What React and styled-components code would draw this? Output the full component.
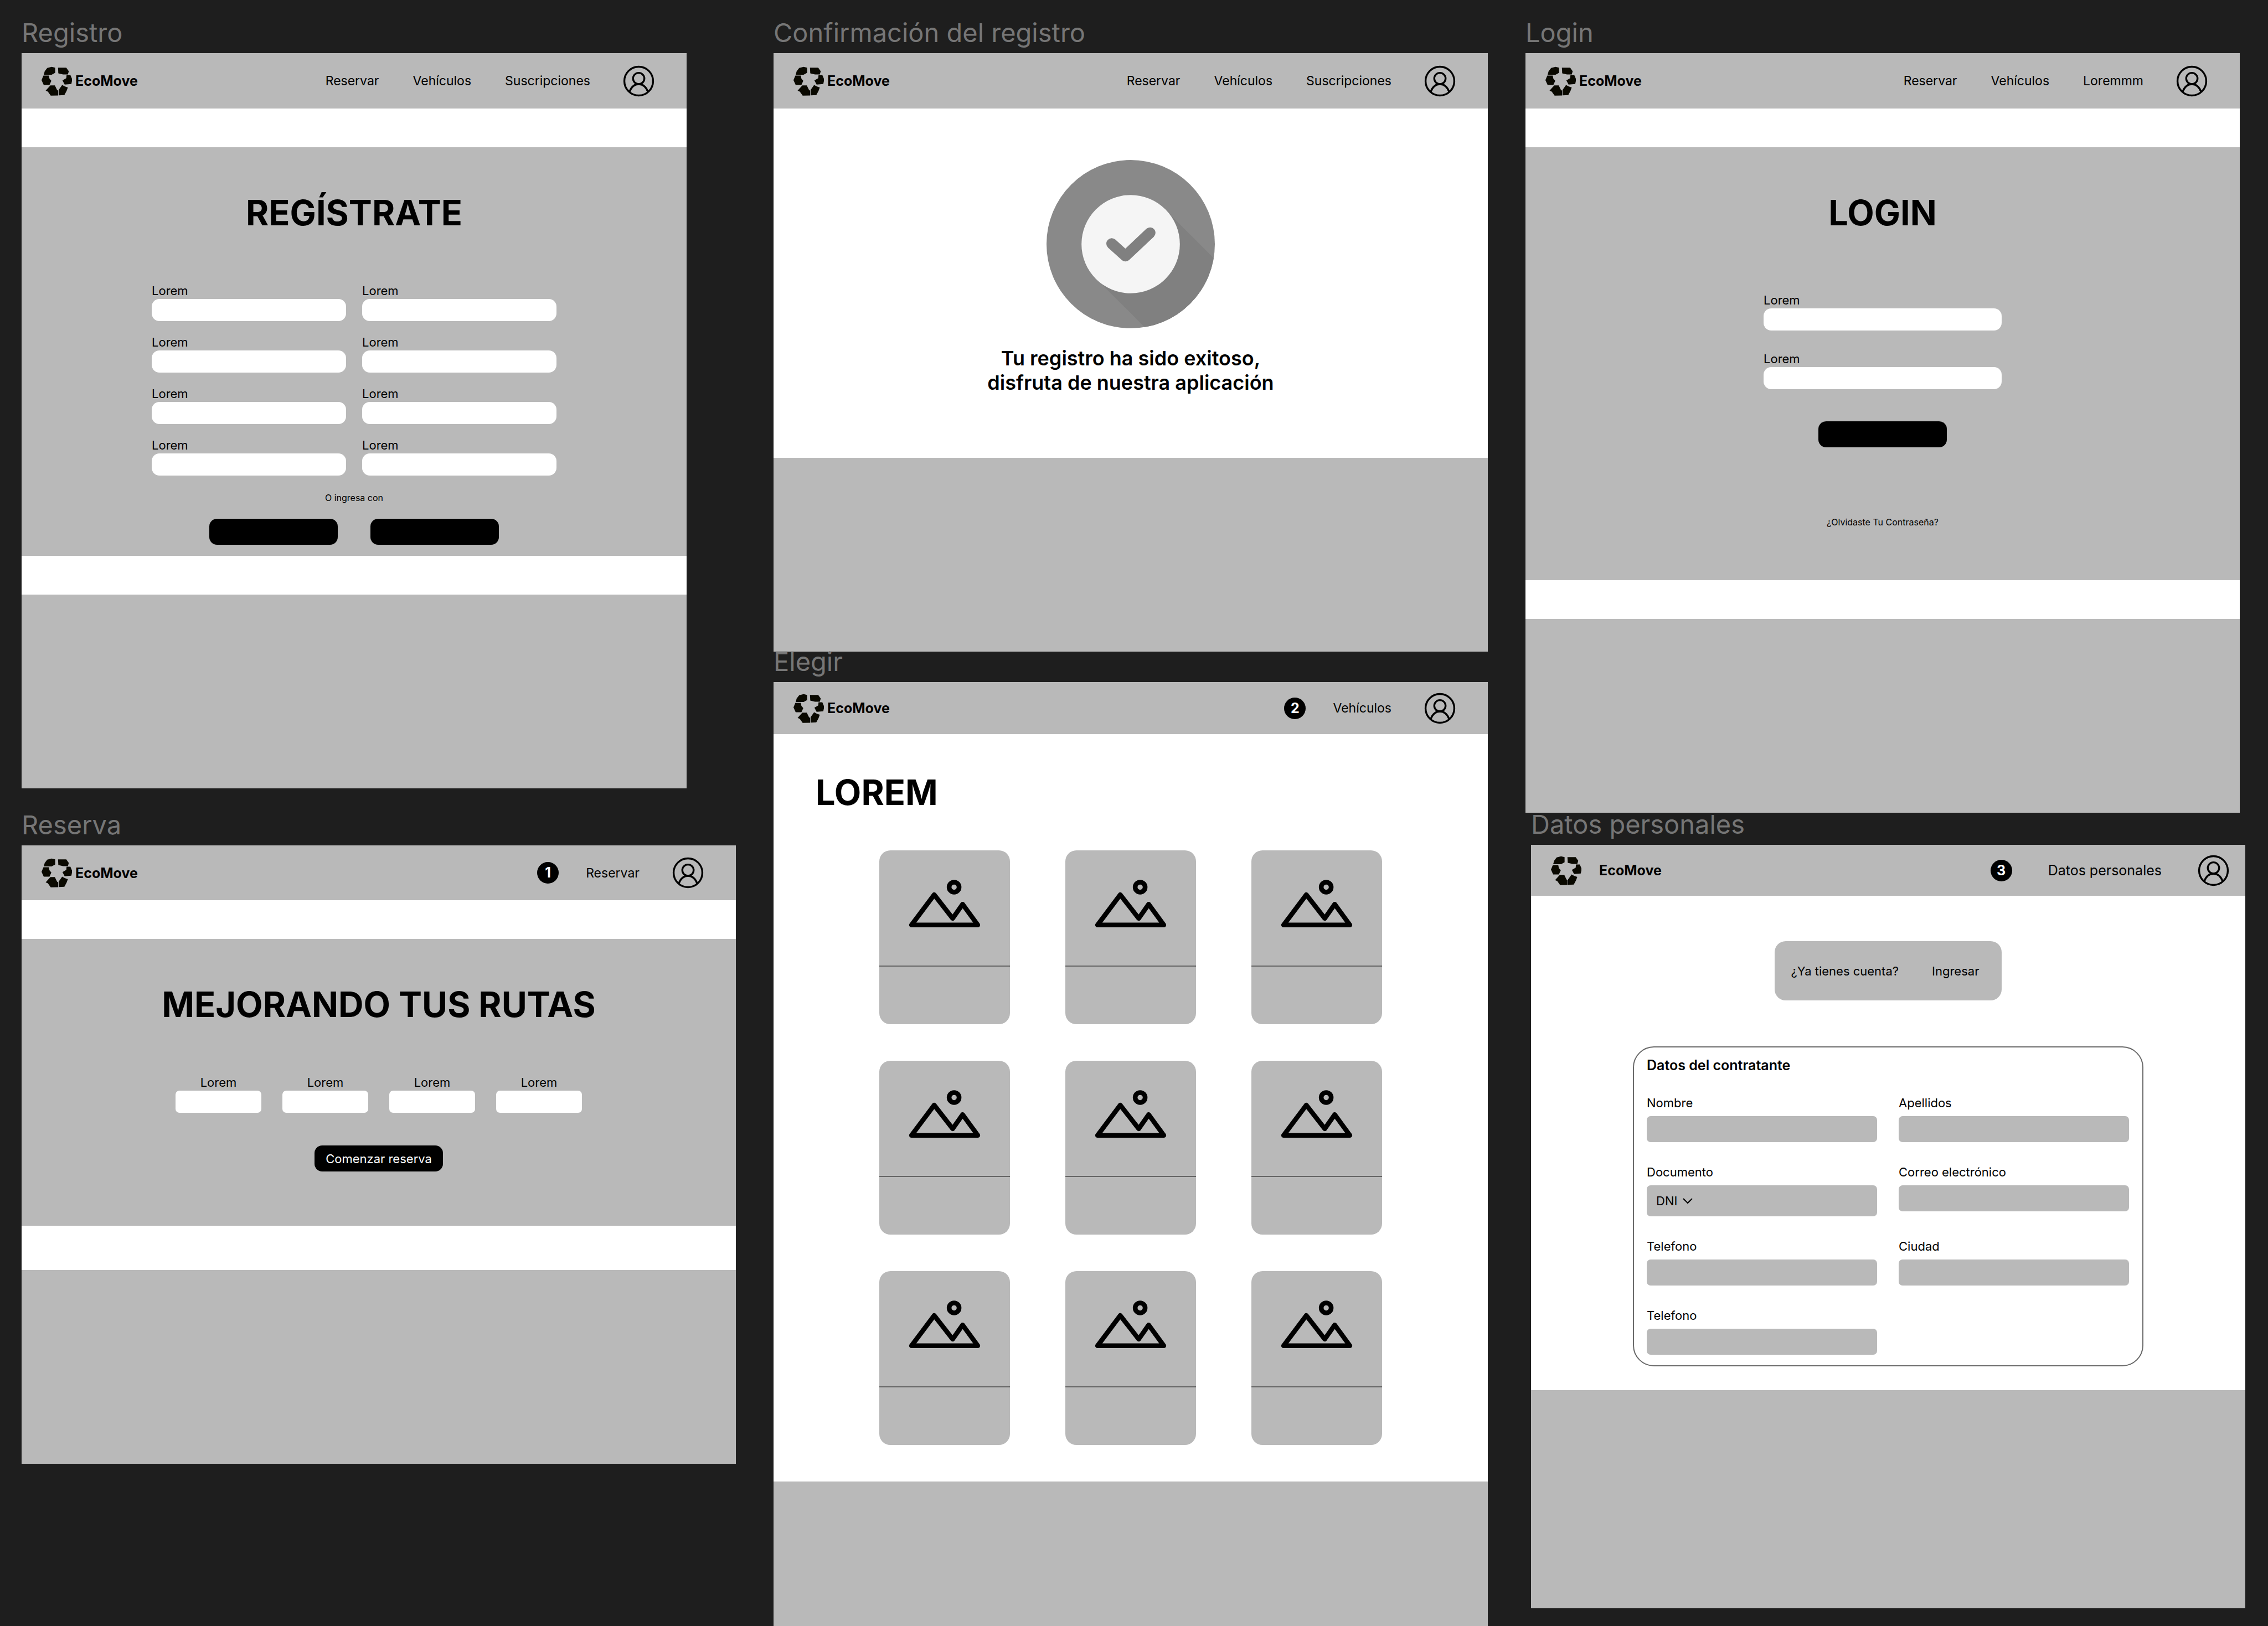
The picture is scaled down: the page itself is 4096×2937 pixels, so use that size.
import React, { useId } from "react";
import styled, { createGlobalStyle } from "styled-components";

const INK = "#000000";
const PAPER = "#ffffff";
const GRAY = "#b9b9b9";
const CANVAS = "#1e1e1e";

const GlobalStyle = createGlobalStyle`
  *, *::before, *::after { box-sizing: border-box; }
  body {
    margin: 0;
    background: ${CANVAS};
    color: ${INK};
    font-family: Inter, Roboto, "Liberation Sans", sans-serif;
  }
  h1, h2, h3, p { margin: 0; }
  svg { display: block; flex: none; }
  button, input, select { font: inherit; color: inherit; }
`;

/* ---------- canvas ---------- */

const Board = styled.main`
  display: grid;
  grid-template-columns: repeat(3, minmax(0, 1fr));
  column-gap: 68px;
  min-height: 100vh;
  padding: 41px 51px 0 39px;
  overflow: hidden;
`;

const Column = styled.div`
  display: flex;
  flex-direction: column;
  gap: ${(p) => p.$gap || 0}px;
`;

const Artboard = styled.section`
  display: flex;
  flex-direction: column;
  flex: ${(p) => (p.$fill ? "1 0 auto" : "none")};
  margin-left: ${(p) => p.$start || 0}px;
  margin-right: ${(p) => p.$end || 0}px;
`;

const ArtboardName = styled.h2`
  padding-bottom: 19px;
  color: #767676;
  font-size: 47px;
  font-weight: 400;
  line-height: 36px;
  white-space: nowrap;
`;

const Screen = styled.div`
  display: flex;
  flex-direction: column;
  flex: 1;
  background: ${PAPER};
`;

const Footer = styled.footer`
  flex: 1 0 auto;
  min-height: ${(p) => p.$height || 350}px;
  background: ${GRAY};
`;

const Strip = styled.div`
  height: ${(p) => p.$height || 70}px;
`;

/* ---------- header ---------- */

const Header = styled.header`
  display: flex;
  align-items: center;
  justify-content: space-between;
  height: ${(p) => p.$height || 100}px;
  padding: 0 ${(p) => (p.$wide ? 29 : 58)}px 0 36px;
  background: ${GRAY};
`;

const Brand = styled.a`
  display: flex;
  align-items: center;
  gap: ${(p) => (p.$wide ? 32 : 6)}px;
  color: inherit;
  font-size: 25px;
  font-weight: 700;
  text-decoration: none;
`;

const Nav = styled.nav`
  display: flex;
  align-items: center;
  gap: ${(p) => (p.$wide ? 65 : 59)}px;
`;

const NavLinks = styled.div`
  display: flex;
  gap: 61px;
`;

const NavLink = styled.a`
  color: inherit;
  font-size: ${(p) => (p.$wide ? 25 : 23)}px;
  text-decoration: none;
`;

const Step = styled.span`
  display: flex;
  align-items: center;
  gap: ${(p) => (p.$wide ? 65 : 49)}px;
`;

const StepNumber = styled.span`
  display: grid;
  place-items: center;
  width: 39px;
  height: 39px;
  border-radius: 50%;
  background: ${INK};
  color: ${PAPER};
  font-size: 25px;
  font-weight: 700;
  line-height: 39px;
`;

const IconButton = styled.button`
  padding: 0;
  border: 0;
  background: none;
`;

/* ---------- content ---------- */

const Band = styled.section`
  display: flex;
  flex-direction: column;
  align-items: center;
  padding: 79px 40px ${(p) => p.$bottom}px;
  background: ${GRAY};
`;

const Title = styled.h1`
  font-size: 63px;
  font-weight: 700;
  line-height: 78px;
  text-align: center;
`;

const FieldGrid = styled.div`
  display: grid;
  grid-template-columns: repeat(${(p) => p.$columns}, minmax(0, 1fr));
  gap: ${(p) => p.$rowGap || 0}px ${(p) => p.$columnGap || 0}px;
  width: min(100%, ${(p) => p.$width}px);
  margin-top: ${(p) => p.$top}px;
`;

const FieldBox = styled.div`
  display: flex;
  flex-direction: column;
  gap: ${(p) => p.$gap || 0}px;
`;

const Label = styled.label`
  font-size: 22px;
  line-height: 30px;
  text-align: ${(p) => p.$align || "left"};
`;

const TextBox = styled.input`
  width: 100%;
  height: ${(p) => (p.$dark ? 47 : 40)}px;
  padding: 0 16px;
  border: 0;
  border-radius: ${(p) => p.$radius}px;
  background: ${(p) => (p.$dark ? GRAY : PAPER)};
`;

const SelectBox = styled.div`
  display: flex;
  align-items: center;
  gap: 9px;
  height: 56px;
  padding-left: 17px;
  border-radius: 7px;
  background: ${GRAY};
`;

const Select = styled.select`
  appearance: none;
  padding: 0;
  border: 0;
  background: none;
  font-size: 22px;
`;

const Actions = styled.div`
  display: flex;
  gap: 59px;
  margin-top: ${(p) => p.$top}px;
`;

const Button = styled.button`
  width: 232px;
  height: 47px;
  padding: 0;
  border: 0;
  border-radius: 14px;
  background: ${INK};
  color: ${PAPER};
  font-size: 22px;
`;

const Note = styled.p`
  margin-top: ${(p) => p.$top}px;
  font-size: 16px;
  line-height: 20px;
`;

const NoteLink = styled.a`
  color: inherit;
  text-decoration: none;
`;

const Confirmation = styled.section`
  display: flex;
  flex-direction: column;
  align-items: center;
  gap: 32px;
  padding: 93px 40px 114px;
`;

const Message = styled.p`
  font-size: 36px;
  font-weight: 600;
  line-height: 44px;
  text-align: center;
`;

const Catalog = styled.section`
  padding: 66px 76px;
`;

const CatalogTitle = styled(Title)`
  text-align: left;
`;

const Cards = styled.ul`
  display: grid;
  grid-template-columns: repeat(3, 236px);
  justify-content: center;
  gap: 66px 100px;
  margin: 66px 0 0;
  padding: 0;
  list-style: none;
`;

const Card = styled.li`
  height: 314px;
  border-radius: 20px;
  background: ${GRAY};
`;

const CardPicture = styled.div`
  display: flex;
  justify-content: center;
  height: 210px;
  padding-top: 51px;
  border-bottom: 2px solid #666666;
`;

const Personal = styled.section`
  display: flex;
  flex-direction: column;
  align-items: center;
  gap: 83px;
  padding: 82px 40px 43px;
`;

const Account = styled.div`
  display: flex;
  align-items: center;
  gap: 60px;
  height: 107px;
  padding: 0 41px 0 30px;
  border-radius: 20px;
  background: ${GRAY};
  font-size: 22px;
`;

const AccountLink = styled.a`
  color: inherit;
  text-decoration: none;
`;

const Holder = styled.form`
  width: min(100%, 922px);
  padding: 17px 24px 19px 23px;
  border: 2px solid #6a6a6a;
  border-radius: 38px;
`;

const HolderTitle = styled.h3`
  font-size: 25px;
  font-weight: 600;
  line-height: 30px;
`;

/* ---------- drawings ---------- */

const Logo = () => (
  <svg width="55" height="55" viewBox="48 84 192 192" fill="#0a0900" aria-hidden="true">
    <path d="M68 118 84 97 112 90 134 95 134 128 112 140 62 140Z" />
    <path d="M60 145 94 145 98 164 110 178 98 204 62 204 48 174Z" />
    <path d="M152 95 204 95 220 118 214 138 184 138 154 131Z" />
    <path d="M206 142 230 142 242 170 236 198 194 202 180 176 204 162Z" />
    <path d="M74 240 104 207 132 207 146 236 153 240 153 271 106 272 88 246Z" />
    <path d="M156 236 178 204 196 214 214 220 206 242 192 268 156 270Z" />
  </svg>
);

const UserIcon = () => (
  <svg
    width="57"
    height="57"
    viewBox="0 0 67 67"
    fill="none"
    stroke={INK}
    strokeWidth="4"
    aria-hidden="true"
  >
    <circle cx="33.500" cy="33.500" r="30.500" />
    <circle cx="33.500" cy="28" r="12" />
    <path d="M14 56 C18 46 25 40 33.500 40 S49 46 53 56" />
  </svg>
);

const CheckBadge = () => (
  <svg width="304" height="304" viewBox="0 0 356 356" aria-hidden="true">
    <defs>
      <clipPath id="badge-edge">
        <circle cx="178" cy="178" r="178" />
      </clipPath>
    </defs>
    <circle cx="178" cy="178" r="178" fill="#898989" />
    <path d="M251 105 L451 305 L305 451 L105 251 Z" fill="#808080" clipPath="url(#badge-edge)" />
    <circle cx="178" cy="178" r="104" fill="#f5f5f5" />
    <path
      d="M138 177 L167 203 L219 154"
      fill="none"
      stroke="#808080"
      strokeWidth="23"
      strokeLinecap="round"
      strokeLinejoin="round"
    />
  </svg>
);

const Mountains = () => (
  <svg
    width="130"
    height="89"
    viewBox="0 0 152 104"
    fill="none"
    stroke={INK}
    strokeWidth="10"
    strokeLinejoin="round"
    aria-hidden="true"
  >
    <path d="M6 98 L54 34 L93 84 L114 54 L146 98 Z" />
    <circle cx="96" cy="18" r="10.500" />
  </svg>
);

const Chevron = () => (
  <svg width="18" height="11" viewBox="0 0 18 11" fill="none" stroke={INK} strokeWidth="2" aria-hidden="true">
    <path d="M1 1 L9 9 L17 1" />
  </svg>
);

/* ---------- composed parts ---------- */

function TopBar({ links, step, stepName, height, wide }) {
  return (
    <Header $height={height} $wide={wide}>
      <Brand href="#" $wide={wide}>
        <Logo />
        EcoMove
      </Brand>
      <Nav $wide={wide}>
        {links && (
          <NavLinks>
            {links.map((text) => (
              <NavLink key={text} href="#">
                {text}
              </NavLink>
            ))}
          </NavLinks>
        )}
        {step && (
          <Step $wide={wide}>
            <StepNumber>{step}</StepNumber>
            <NavLink href="#" $wide={wide}>
              {stepName}
            </NavLink>
          </Step>
        )}
        <IconButton type="button" aria-label="Cuenta">
          <UserIcon />
        </IconButton>
      </Nav>
    </Header>
  );
}

function Field({ label, align, radius = 14, dark, type = "text" }) {
  const id = useId();
  return (
    <FieldBox $gap={dark ? 9 : 0}>
      <Label htmlFor={id} $align={align}>
        {label}
      </Label>
      <TextBox id={id} type={type} $radius={radius} $dark={dark} />
    </FieldBox>
  );
}

function DocumentField() {
  const id = useId();
  return (
    <FieldBox $gap={9}>
      <Label htmlFor={id}>Documento</Label>
      <SelectBox>
        <Select id={id}>
          <option>DNI</option>
        </Select>
        <Chevron />
      </SelectBox>
    </FieldBox>
  );
}

function Register() {
  return (
    <Artboard $end={89}>
      <ArtboardName>Registro</ArtboardName>
      <Screen>
        <TopBar links={["Reservar", "Vehículos", "Suscripciones"]} />
        <Strip />
        <Band $bottom={20}>
          <Title>REGÍSTRATE</Title>
          <FieldGrid $columns={2} $rowGap={23} $columnGap={29} $width={731} $top={87}>
            {Array.from({ length: 8 }, (_, i) => (
              <Field key={i} label="Lorem" />
            ))}
          </FieldGrid>
          <Note $top={30}>O ingresa con</Note>
          <Actions $top={28}>
            <Button type="button" aria-label="Primera opción" />
            <Button type="button" aria-label="Segunda opción" />
          </Actions>
        </Band>
        <Strip />
        <Footer />
      </Screen>
    </Artboard>
  );
}

function Booking() {
  return (
    <Artboard>
      <ArtboardName>Reserva</ArtboardName>
      <Screen>
        <TopBar step="1" stepName="Reservar" height={99} />
        <Strip />
        <Band $bottom={98}>
          <Title>MEJORANDO TUS RUTAS</Title>
          <FieldGrid $columns={4} $columnGap={38} $width={734} $top={87}>
            {Array.from({ length: 4 }, (_, i) => (
              <Field key={i} label="Lorem" align="center" radius={7} />
            ))}
          </FieldGrid>
          <Actions $top={59}>
            <Button type="button">Comenzar reserva</Button>
          </Actions>
        </Band>
        <Strip $height={80} />
        <Footer />
      </Screen>
    </Artboard>
  );
}

function Confirmed() {
  return (
    <Artboard>
      <ArtboardName>Confirmación del registro</ArtboardName>
      <Screen>
        <TopBar links={["Reservar", "Vehículos", "Suscripciones"]} />
        <Confirmation>
          <CheckBadge />
          <Message>
            Tu registro ha sido exitoso,
            <br />
            disfruta de nuestra aplicación
          </Message>
        </Confirmation>
        <Footer />
      </Screen>
    </Artboard>
  );
}

function Choose() {
  return (
    <Artboard $fill>
      <ArtboardName>Elegir</ArtboardName>
      <Screen>
        <TopBar step="2" stepName="Vehículos" height={94} />
        <Catalog>
          <CatalogTitle>LOREM</CatalogTitle>
          <Cards>
            {Array.from({ length: 9 }, (_, i) => (
              <Card key={i}>
                <CardPicture>
                  <Mountains />
                </CardPicture>
              </Card>
            ))}
          </Cards>
        </Catalog>
        <Footer $height={200} />
      </Screen>
    </Artboard>
  );
}

function Login() {
  return (
    <Artboard>
      <ArtboardName>Login</ArtboardName>
      <Screen>
        <TopBar links={["Reservar", "Vehículos", "Loremmm"]} />
        <Strip />
        <Band $bottom={95}>
          <Title>LOGIN</Title>
          <FieldGrid $columns={1} $rowGap={36} $width={430} $top={104}>
            <Field label="Lorem" />
            <Field label="Lorem" type="password" />
          </FieldGrid>
          <Actions $top={58}>
            <Button type="button" aria-label="Entrar" />
          </Actions>
          <Note $top={125}>
            <NoteLink href="#">¿Olvidaste Tu Contraseña?</NoteLink>
          </Note>
        </Band>
        <Strip />
        <Footer />
      </Screen>
    </Artboard>
  );
}

function PersonalData() {
  return (
    <Artboard $start={10} $end={-10}>
      <ArtboardName>Datos personales</ArtboardName>
      <Screen>
        <TopBar step="3" stepName="Datos personales" height={92} wide />
        <Personal>
          <Account>
            <span>¿Ya tienes cuenta?</span>
            <AccountLink href="#">Ingresar</AccountLink>
          </Account>
          <Holder>
            <HolderTitle>Datos del contratante</HolderTitle>
            <FieldGrid $columns={2} $rowGap={39} $columnGap={39} $width={871} $top={38}>
              <Field label="Nombre" radius={7} dark />
              <Field label="Apellidos" radius={7} dark />
              <DocumentField />
              <Field label="Correo electrónico" radius={7} dark type="email" />
              <Field label="Telefono" radius={7} dark type="tel" />
              <Field label="Ciudad" radius={7} dark />
              <Field label="Telefono" radius={7} dark type="tel" />
            </FieldGrid>
          </Holder>
        </Personal>
        <Footer $height={394} />
      </Screen>
    </Artboard>
  );
}

export default function App() {
  return (
    <>
      <GlobalStyle />
      <Board>
        <Column $gap={48}>
          <Register />
          <Booking />
        </Column>
        <Column>
          <Confirmed />
          <Choose />
        </Column>
        <Column $gap={3}>
          <Login />
          <PersonalData />
        </Column>
      </Board>
    </>
  );
}
